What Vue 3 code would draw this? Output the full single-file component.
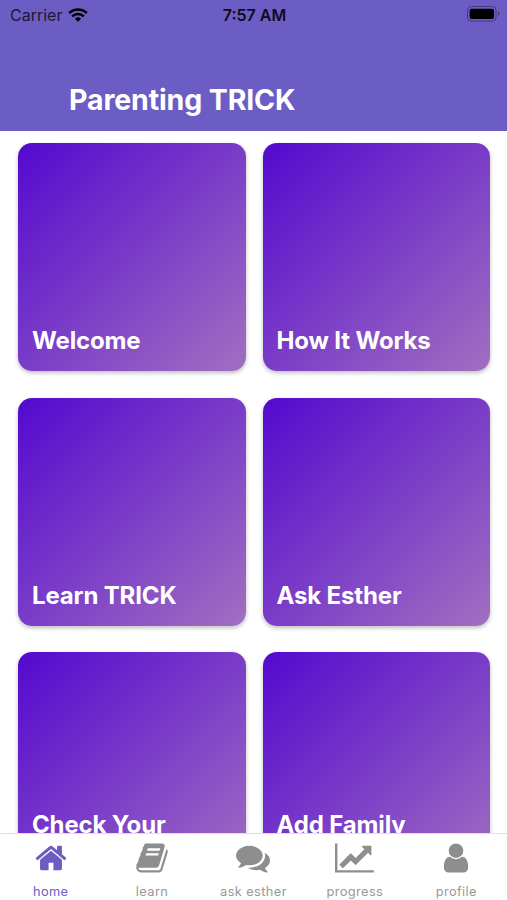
<script setup>
import { ref } from "vue";

const cards = ref([
  { id: 1, title: "Welcome" },
  { id: 2, title: "How It Works" },
  { id: 3, title: "Learn TRICK" },
  { id: 4, title: "Ask Esther" },
  { id: 5, title: "Check Your", tall: true },
  { id: 6, title: "Add Family", tall: true },
]);

const activeTab = ref("home");

const tabs = [
  {
    name: "home",
    viewBox: "0 0 1792 1792",
    path: "M1472 992v480q0 26-19 45t-45 19h-384v-384h-256v384h-384q-26 0-45-19t-19-45v-480q0-1 .5-3t.5-3l575-474 575 474q1 2 1 6zm223-69l-62 74q-8 9-21 11h-3q-13 0-21-7l-692-577-692 577q-12 8-24 7-13-2-21-11l-62-74q-8-10-7-23.5t11-21.5l719-599q32-26 76-26t76 26l244 204v-195q0-14 9-23t23-9h192q14 0 23 9t9 23v408l219 182q10 8 11 21.5t-7 23.5z",
  },
  {
    name: "learn",
    viewBox: "0 0 1792 1792",
    path: "M1703 478q40 57 18 129l-275 906q-19 64-76.5 107.5t-122.5 43.5h-923q-77 0-148.5-53.5t-99.5-131.5q-24-67-2-127 0-4 3-27t4-37q1-8-3-21.5t-3-19.5q2-11 8-21t16.5-23.5 16.5-23.5q23-38 45-91.5t30-91.5q3-10 .5-30t-.5-28q3-11 17-28t17-23q21-36 42-92t25-90q1-9-2.5-32t.5-28q4-13 22-30.5t22-22.5q19-26 42.5-84.5t27.5-96.5q1-8-3-25.5t-2-26.5q2-8 9-18t18-23 17-21q8-12 16.5-30.5t15-35 16-36 19.5-32 26.5-23.5 36-11.5 47.5 5.5l-1 3q38-9 51-9h761q74 0 114 56t18 130l-274 906q-36 119-71.5 153.5t-128.5 34.5h-869q-27 0-38 15-11 16-1 43 24 70 144 70h923q29 0 56-15.5t35-41.5l300-987q7-22 5-57 38 15 59 43zm-1064 2q-4 13 2 22.5t20 9.5h608q13 0 25.5-9.5t16.5-22.5l21-64q4-13-2-22.5t-20-9.5h-608q-13 0-25.5 9.5t-16.5 22.5zm-83 256q-4 13 2 22.5t20 9.5h608q13 0 25.5-9.5t16.5-22.5l21-64q4-13-2-22.5t-20-9.5h-608q-13 0-25.5 9.5t-16.5 22.5z",
  },
  {
    name: "ask esther",
    viewBox: "0 0 1792 1792",
    path: "M1408 768q0 139-94 257t-256.5 186.5-353.5 68.5q-86 0-176-16-124 88-278 128-36 9-86 16h-3q-11 0-20.5-8t-11.5-21q-1-3-1-6.5t.5-6.5 2-6l2.5-5 3.5-5.5 4-5 4.5-5 4-4.5q5-6 23-25t26-29.5 22.5-29 25-38.5 20.5-44q-124-72-195-177t-71-224q0-139 94-257t256.5-186.5 353.5-68.5 353.5 68.5 256.5 186.5 94 257zm384 256q0 120-71 224.5t-195 176.5q10 24 20.5 44t25 38.5 22.5 29 26 29.5 23 25q1 1 4 4.5t4.5 5 4 5 3.5 5.5l2.5 5 2 6 .5 6.5-1 6.5q-3 14-13 22t-22 7q-50-7-86-16-154-40-278-128-90 16-176 16-271 0-472-132 58 4 88 4 161 0 309-45t264-129q125-92 192-212t67-254q0-77-23-152 129 71 204 178t75 230z",
  },
  {
    name: "progress",
    viewBox: "0 0 2048 1792",
    path: "M2048 1536v128h-2048v-1536h128v1408h1920zm-128-1248v435q0 21-19.5 29.5t-35.5-7.5l-121-121-633 633q-10 10-23 10t-23-10l-233-233-416 416-192-192 585-585q10-10 23-10t23 10l233 233 464-464-121-121q-16-16-7.5-35.5t29.5-19.5h435q14 0 23 9t9 23z",
  },
  {
    name: "profile",
    viewBox: "0 0 1792 1792",
    path: "M1536 1399q0 109-62.5 187t-150.5 78h-854q-88 0-150.5-78t-62.5-187q0-85 8.5-160.5t31.5-152 58.5-131 94-89 134.5-34.5q131 128 313 128t313-128q76 0 134.5 34.5t94 89 58.5 131 31.5 152 8.5 160.5zm-256-887q0 159-112.5 271.5t-271.5 112.5-271.5-112.5-112.5-271.5 112.5-271.5 271.5-112.5 271.5 112.5 112.5 271.5z",
  },
];
</script>

<template>
  <div class="app">
    <header class="header">
      <div class="status">
        <div class="carrier">
          <span>Carrier</span>
          <svg class="wifi" viewBox="0 0 20 14">
            <path d="M1.2 5.2a12.6 12.6 0 0 1 17.6 0" />
            <path d="M4.2 8.4a8.3 8.3 0 0 1 11.6 0" />
            <path class="dot" d="M6.9 10.7a4.6 4.6 0 0 1 6.2 0L10 13.8z" />
          </svg>
        </div>
        <span class="time">7:57 AM</span>
        <div class="battery-side">
          <svg class="battery" viewBox="0 0 33 16">
            <rect class="shell" x="0.5" y="0.5" width="28.6" height="14.6" rx="4" />
            <rect x="2.6" y="2.7" width="24.4" height="10.2" rx="2" />
            <path class="cap" d="M31 5.6q1.6 .8 1.6 2.2t-1.6 2.2z" />
          </svg>
        </div>
      </div>
      <h1>Parenting TRICK</h1>
    </header>

    <main class="grid">
      <div class="card" v-for="card in cards" :key="card.id">
        <h2 :class="{ tall: card.tall }">{{ card.title }}</h2>
      </div>
    </main>

    <nav class="tabs">
      <a
        v-for="tab in tabs"
        :key="tab.name"
        class="tab"
        :class="{ active: activeTab === tab.name }"
        @click="activeTab = tab.name"
      >
        <svg class="icon" :viewBox="tab.viewBox">
          <path :d="tab.path" />
        </svg>
        <span>{{ tab.name }}</span>
      </a>
    </nav>
  </div>
</template>

<style>
body {
  margin: 0;
  overflow: hidden;
}
</style>

<style scoped>
.app {
  display: flex;
  flex-direction: column;
  height: 900px;
  overflow: hidden;
  background: #fff;
  font-family: Inter, "Liberation Sans", sans-serif;
}

.header {
  flex: none;
  height: 131px;
  background: #6c5dc4;
}

.status {
  display: grid;
  grid-template-columns: 1fr auto 1fr;
  align-items: center;
  height: 30px;
  padding: 0 7px 0 10px;
  color: #0e0b1c;
  font-size: 16px;
}

.carrier {
  display: flex;
  align-items: center;
  gap: 6px;
  color: #1c1736;
}

.wifi {
  width: 20px;
  height: 14px;
  margin-top: -1px;
  fill: none;
  stroke: #000;
  stroke-width: 2.5;
}

.wifi .dot {
  fill: #000;
  stroke: none;
}

.time {
  padding-right: 1px;
  font-weight: 600;
}

.battery-side {
  display: flex;
  justify-content: flex-end;
}

.battery {
  width: 33px;
  height: 16px;
  margin-top: -2px;
}

.battery .shell {
  fill: none;
  stroke: #453b7c;
}

.battery .cap {
  fill: #453b7c;
}

h1 {
  margin: 52px 0 0 69px;
  color: #fff;
  font-size: 28.5px;
  font-weight: 700;
  letter-spacing: -0.12px;
  line-height: 36px;
  white-space: nowrap;
}

.grid {
  flex: 1;
  min-height: 0;
  display: grid;
  grid-template-columns: 227.5px 227.5px;
  grid-auto-rows: 228px;
  gap: 26.7px 17px;
  padding: 12px 17px 0 18px;
  overflow: hidden;
}

.card {
  display: flex;
  align-items: flex-end;
  box-sizing: border-box;
  padding: 0 14px 16px;
  border-radius: 14px;
  background: linear-gradient(135deg, #5409cf 0%, #7a3cc8 50%, #a070c0 100%);
  box-shadow: 0 2px 4px rgba(0, 0, 0, 0.26);
}

.card h2 {
  margin: 0;
  color: #fff;
  font-size: 24px;
  font-weight: 700;
  letter-spacing: -0.15px;
  line-height: 28px;
  white-space: nowrap;
}

.card h2.tall {
  padding-bottom: 25px;
}

.tabs {
  flex: none;
  display: grid;
  grid-template-columns: repeat(5, 1fr);
  box-sizing: border-box;
  height: 67px;
  border-top: 1px solid #e0e0e2;
  background: #fff;
}

.tab {
  display: flex;
  flex-direction: column;
  align-items: center;
  padding-top: 7px;
  color: #8e8e8e;
  font-size: 12.8px;
  letter-spacing: 0.4px;
  line-height: 16px;
  white-space: nowrap;
  cursor: pointer;
}

.tab span {
  color: #989898;
}

.tab.active,
.tab.active span {
  color: #6c5dc4;
}

.icon {
  height: 34px;
  margin-bottom: 9px;
  fill: currentColor;
}
</style>
